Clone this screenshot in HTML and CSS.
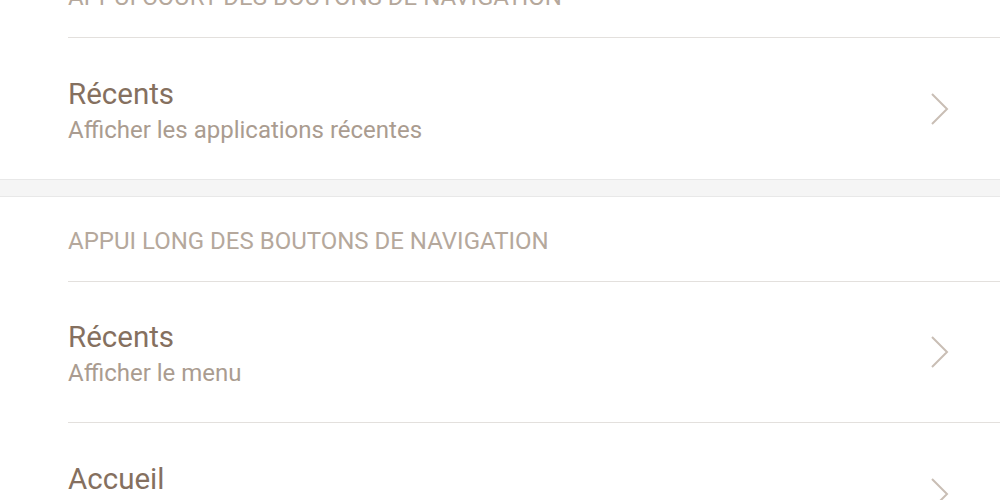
FILE: index.html
```html
<!DOCTYPE html>
<html lang="fr">
<head>
    <meta charset="UTF-8">
    <meta name="viewport" content="width=device-width, initial-scale=1.0">
    <title>Boutons de navigation</title>
    <link rel="stylesheet" href="styles.css">
</head>
<body>
    <div class="settings">
        <div class="group">
            <div class="group-title">APPUI COURT DES BOUTONS DE NAVIGATION</div>
            <div class="item">
                <div class="item-text">
                    <div class="item-name">Récents</div>
                    <div class="item-value">Afficher les applications récentes</div>
                </div>
                <svg class="chevron" width="18" height="32" viewBox="0 0 18 32">
                    <polyline points="1,1 16,16 1,31" />
                </svg>
            </div>
        </div>

        <div class="spacer"></div>

        <div class="group">
            <div class="group-title">APPUI LONG DES BOUTONS DE NAVIGATION</div>
            <div class="item">
                <div class="item-text">
                    <div class="item-name">Récents</div>
                    <div class="item-value">Afficher le menu</div>
                </div>
                <svg class="chevron" width="18" height="32" viewBox="0 0 18 32">
                    <polyline points="1,1 16,16 1,31" />
                </svg>
            </div>
            <div class="item">
                <div class="item-text">
                    <div class="item-name">Accueil</div>
                    <div class="item-value">Aucune action</div>
                </div>
                <svg class="chevron" width="18" height="32" viewBox="0 0 18 32">
                    <polyline points="1,1 16,16 1,31" />
                </svg>
            </div>
        </div>
    </div>
</body>
</html>
```

FILE: styles.css
```css
body {
    margin: 0;
    padding: 0;
    background-color: #fff;
    font-family: Roboto, "Liberation Sans", sans-serif;
    overflow: hidden;
}

/* page is scrolled: first header is cut at the top */
.settings {
    margin-top: -47px;
}

.group {
    background-color: #fff;
}

.group-title {
    height: 85px;
    margin-left: 68px;
    padding-top: 4px;
    display: flex;
    align-items: center;
    font-size: 24px;
    color: #b5a89c;
    border-bottom: 1px solid #e3e0dd;
    box-sizing: border-box;
}

.item {
    height: 141px;
    margin-left: 68px;
    padding-right: 51px;
    display: flex;
    align-items: center;
    justify-content: space-between;
    border-bottom: 1px solid #e3e0dd;
    box-sizing: border-box;
}

.group .item:last-child {
    border-bottom: none;
}

.item-text {
    padding-top: 4px;
}

.item-name {
    font-size: 29.5px;
    color: #85705f;
    line-height: 38px;
}

.item-value {
    font-size: 24px;
    color: #aa9c90;
    line-height: 34px;
}

.chevron polyline {
    fill: none;
    stroke: #c9beb5;
    stroke-width: 2;
}

/* grey band between the two groups */
.spacer {
    height: 18px;
    background-color: #f5f5f5;
    border-top: 1px solid #e8e8e8;
    border-bottom: 1px solid #e8e8e8;
    box-sizing: border-box;
}
```
